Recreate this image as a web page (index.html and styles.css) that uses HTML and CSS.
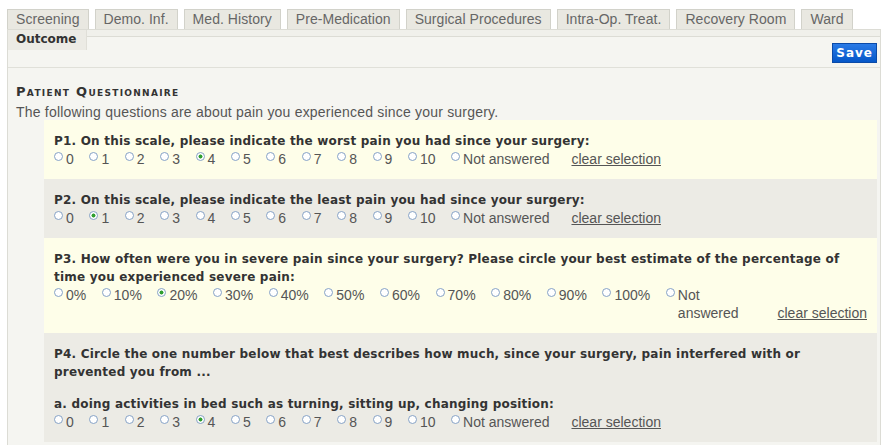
FILE: index.html
```html
<!DOCTYPE html>
<html>
<head>
<meta charset="utf-8">
<title>Outcome</title>
<link rel="stylesheet" href="styles.css">
</head>
<body>
<div class="tabs">
  <span class="tab">Screening</span>
  <span class="tab">Demo. Inf.</span>
  <span class="tab">Med. History</span>
  <span class="tab">Pre-Medication</span>
  <span class="tab">Surgical Procedures</span>
  <span class="tab">Intra-Op. Treat.</span>
  <span class="tab">Recovery Room</span>
  <span class="tab">Ward</span>
</div>
<div class="panel">
  <div class="head">
    <div class="tab-active">Outcome</div>
    <div class="head-right">
      <div class="band"></div>
      <div class="toolbar"><button class="save" type="button">Save</button></div>
    </div>
  </div>
  <div class="content">
    <h2 class="section">Patient Questionnaire</h2>
    <p class="intro">The following questions are about pain you experienced since your surgery.</p>

    <div class="q yellow">
      <div class="qtext">P1. On this scale, please indicate the worst pain you had since your surgery:</div>
      <div class="opts">
        <label class="opt"><input type="radio" name="p1"><span>0</span></label>
        <label class="opt"><input type="radio" name="p1"><span>1</span></label>
        <label class="opt"><input type="radio" name="p1"><span>2</span></label>
        <label class="opt"><input type="radio" name="p1"><span>3</span></label>
        <label class="opt"><input type="radio" name="p1" checked><span>4</span></label>
        <label class="opt"><input type="radio" name="p1"><span>5</span></label>
        <label class="opt"><input type="radio" name="p1"><span>6</span></label>
        <label class="opt"><input type="radio" name="p1"><span>7</span></label>
        <label class="opt"><input type="radio" name="p1"><span>8</span></label>
        <label class="opt"><input type="radio" name="p1"><span>9</span></label>
        <label class="opt"><input type="radio" name="p1"><span>10</span></label>
        <label class="opt na"><input type="radio" name="p1"><span>Not answered</span></label>
        <a class="clear" href="#">clear selection</a>
      </div>
    </div>

    <div class="q grey">
      <div class="qtext">P2. On this scale, please indicate the least pain you had since your surgery:</div>
      <div class="opts">
        <label class="opt"><input type="radio" name="p2"><span>0</span></label>
        <label class="opt"><input type="radio" name="p2" checked><span>1</span></label>
        <label class="opt"><input type="radio" name="p2"><span>2</span></label>
        <label class="opt"><input type="radio" name="p2"><span>3</span></label>
        <label class="opt"><input type="radio" name="p2"><span>4</span></label>
        <label class="opt"><input type="radio" name="p2"><span>5</span></label>
        <label class="opt"><input type="radio" name="p2"><span>6</span></label>
        <label class="opt"><input type="radio" name="p2"><span>7</span></label>
        <label class="opt"><input type="radio" name="p2"><span>8</span></label>
        <label class="opt"><input type="radio" name="p2"><span>9</span></label>
        <label class="opt"><input type="radio" name="p2"><span>10</span></label>
        <label class="opt na"><input type="radio" name="p2"><span>Not answered</span></label>
        <a class="clear" href="#">clear selection</a>
      </div>
    </div>

    <div class="q yellow">
      <div class="qtext">P3. How often were you in severe pain since your surgery? Please circle your best estimate of the percentage of time you experienced severe pain:</div>
      <div class="opts">
        <label class="opt"><input type="radio" name="p3"><span>0%</span></label>
        <label class="opt"><input type="radio" name="p3"><span>10%</span></label>
        <label class="opt"><input type="radio" name="p3" checked><span>20%</span></label>
        <label class="opt"><input type="radio" name="p3"><span>30%</span></label>
        <label class="opt"><input type="radio" name="p3"><span>40%</span></label>
        <label class="opt"><input type="radio" name="p3"><span>50%</span></label>
        <label class="opt"><input type="radio" name="p3"><span>60%</span></label>
        <label class="opt"><input type="radio" name="p3"><span>70%</span></label>
        <label class="opt"><input type="radio" name="p3"><span>80%</span></label>
        <label class="opt"><input type="radio" name="p3"><span>90%</span></label>
        <label class="opt"><input type="radio" name="p3"><span>100%</span></label>
        <label class="opt na"><input type="radio" name="p3"><span>Not answered</span></label>
        <a class="clear" href="#">clear selection</a>
      </div>
    </div>

    <div class="q grey">
      <div class="qtext">P4. Circle the one number below that best describes how much, since your surgery, pain interfered with or prevented you from ...</div>
      <div class="qtext sub">a. doing activities in bed such as turning, sitting up, changing position:</div>
      <div class="opts">
        <label class="opt"><input type="radio" name="p4a"><span>0</span></label>
        <label class="opt"><input type="radio" name="p4a"><span>1</span></label>
        <label class="opt"><input type="radio" name="p4a"><span>2</span></label>
        <label class="opt"><input type="radio" name="p4a"><span>3</span></label>
        <label class="opt"><input type="radio" name="p4a" checked><span>4</span></label>
        <label class="opt"><input type="radio" name="p4a"><span>5</span></label>
        <label class="opt"><input type="radio" name="p4a"><span>6</span></label>
        <label class="opt"><input type="radio" name="p4a"><span>7</span></label>
        <label class="opt"><input type="radio" name="p4a"><span>8</span></label>
        <label class="opt"><input type="radio" name="p4a"><span>9</span></label>
        <label class="opt"><input type="radio" name="p4a"><span>10</span></label>
        <label class="opt na"><input type="radio" name="p4a"><span>Not answered</span></label>
        <a class="clear" href="#">clear selection</a>
      </div>
    </div>
  </div>
</div>
</body>
</html>
```
FILE: styles.css
```css
* { box-sizing: border-box; }
html, body { margin: 0; background: #fff; }
body {
  padding: 9px 10px 0 7px;
  font-family: "Liberation Sans", Arial, sans-serif;
  font-size: 14px;
  color: #555;
}
.tabs { display: flex; gap: 6px; height: 20px; }
.tab {
  height: 20px;
  padding: 0 8px;
  border: 1px solid #d2d2ca;
  border-bottom: 0;
  background: #e9e8e1;
  color: #666;
  line-height: 19px;
  letter-spacing: 0.05px;
  white-space: nowrap;
}
.panel {
  border: 1px solid #dcdcd5;
  border-bottom: 0;
  background: #f5f5f1;
  min-height: 430px;
}
.head { display: flex; border-bottom: 1px solid #e0e0d9; }
.tab-active {
  width: 79px;
  height: 20px;
  padding-left: 8px;
  background: #ecebe5;
  border-right: 1px solid #e0dfd8;
  font: bold 12px "DejaVu Sans", Verdana, sans-serif;
  line-height: 19px;
  color: #333;
}
.head-right { flex: 1; }
.band { height: 7px; background: #f0f0eb; border-bottom: 1px solid #dcdcd5; }
.toolbar { display: flex; justify-content: flex-end; padding: 6px 3px 4px; }
.save {
  height: 20px;
  padding: 0 3px;
  border: 1px solid #0a4aa8;
  background: linear-gradient(#2a7ae6, #0557c8);
  color: #fff;
  font: bold 12px "DejaVu Sans", Verdana, sans-serif;
  letter-spacing: 1px;
  line-height: 18px;
}
.content { padding: 17px 3px 0 8px; }
.section {
  margin: 0;
  font: bold 13px "DejaVu Sans", Verdana, sans-serif;
  font-variant: small-caps;
  letter-spacing: 1.3px;
  line-height: 14px;
  color: #333;
}
.intro { margin: 6px 0 0; line-height: 15px; letter-spacing: 0.2px; }
.q { margin-left: 28px; padding: 12px 10px 11px 10px; }
.q.yellow { background: #fefee9; }
.q.grey { background: #ecebe5; }
.qtext {
  font: bold 12px "DejaVu Sans", Verdana, sans-serif;
  letter-spacing: 0.2px;
  line-height: 18px;
  color: #333;
}
.qtext.sub { margin-top: 14px; }
.opts { display: flex; align-items: flex-start; line-height: 18px; }
.opt { flex: none; display: flex; align-items: flex-start; margin-right: 15.6px; }
.opt.na { flex: 0 1 auto; margin-right: 3px; }
.opt input {
  appearance: none;
  -webkit-appearance: none;
  flex: none;
  width: 9px;
  height: 9px;
  margin: 2px 3px 0 0;
  border: 1px solid #86a2c6;
  border-radius: 50%;
  background: #fff;
}
.opt input:checked {
  background: radial-gradient(circle, #2f9e2f 0 1.7px, #fff 2.3px);
}
.clear { flex: none; align-self: flex-end; margin-left: 19px; color: #555; text-decoration: underline; }
```
